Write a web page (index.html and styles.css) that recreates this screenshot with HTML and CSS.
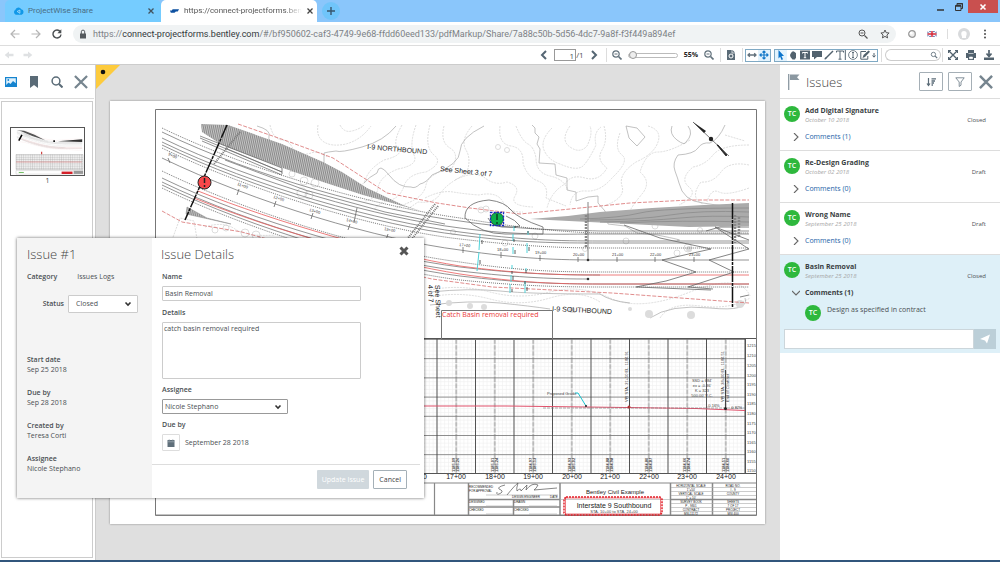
FILE: index.html
```
<!DOCTYPE html>
<html lang="en">

<head>
    <meta charset="UTF-8">
    <meta name="viewport" content="width=device-width, initial-scale=1.0">
    <title>ProjectWise Share - PDF Markup</title>
    <link rel="stylesheet" href="styles.css">
</head>

<body>
    <header class="browser">
        <div class="tab-strip">
            <div class="tab">
                <svg class="favicon" viewBox="0 0 12 10"><path d="M3 9a3 3 0 0 1-.4-5.4A3.4 3.4 0 0 1 9 3.2 3 3 0 0 1 9.500 9z" fill="#1198e8"/><path d="M4.500 5.500l3-1.500v3.500z" fill="none" stroke="#bfe8ff" stroke-width=".8"/></svg>
                <span class="tab-title">ProjectWise Share</span>
                <button class="tab-close" aria-label="Close tab"><svg viewBox="0 0 8 8"><path d="M1.500 1.500l5 5M6.500 1.500l-5 5" stroke="#41535f" stroke-width="1.300"/></svg></button>
            </div>
            <div class="tab active">
                <svg class="favicon" viewBox="0 0 12 10"><path d="M1 4.500l2 0 1-1.500 7 0-1.500 2.500-2 0-1.500 1.500-4 0z" fill="#0d50a0"/></svg>
                <span class="tab-title fade">https://connect-projectforms.ben</span>
                <button class="tab-close" aria-label="Close tab"><svg viewBox="0 0 8 8"><path d="M1.500 1.500l5 5M6.500 1.500l-5 5" stroke="#444" stroke-width="1.300"/></svg></button>
            </div>
            <button class="new-tab" aria-label="New tab"><svg viewBox="0 0 8 8"><path d="M4 0v8M0 4h8" stroke="#38566b" stroke-width="1.400"/></svg></button>
            <div class="window-controls">
                <button aria-label="Minimize"><svg viewBox="0 0 8 8"><path d="M0 7h7" stroke="#333" stroke-width="1.500"/></svg></button>
                <button aria-label="Restore"><svg viewBox="0 0 8 8"><path d="M.5 2.500h5.500v5h-5.500zM2 2.500v-2h5.500v5h-1.500" fill="none" stroke="#333"/><path d="M.5 3h5.500M2 .7h5.500" stroke="#333" stroke-width="1.500"/></svg></button>
                <button class="window-close" aria-label="Close window"><svg viewBox="0 0 8 8"><path d="M1.500 1.500l5 5M6.500 1.500l-5 5" stroke="#fff" stroke-width="1.600"/></svg></button>
            </div>
        </div>
        <div class="address-row">
            <button class="nav-btn" aria-label="Back"><svg viewBox="0 0 10 10"><path d="M9.500 5H1M5 1L1 5l4 4" fill="none" stroke="#b5b5b5" stroke-width="1.200"/></svg></button>
            <button class="nav-btn" aria-label="Forward"><svg viewBox="0 0 10 10"><path d="M.5 5H9M5 1l4 4-4 4" fill="none" stroke="#b5b5b5" stroke-width="1.200"/></svg></button>
            <button class="nav-btn" aria-label="Reload"><svg viewBox="0 0 10 10"><path d="M8.300 2.700A4 4 0 1 0 9 5.500" fill="none" stroke="#4b4f52" stroke-width="1.400"/><path d="M9.300.3v3.900H5.400z" fill="#4b4f52"/></svg></button>
            <div class="omnibox">
                <svg class="lock" viewBox="0 0 8 10"><path d="M1 4.500h6v5H1z" fill="#555a5e"/><path d="M2.300 5V2.800a1.700 1.700 0 0 1 3.400 0V5" fill="none" stroke="#555a5e"/></svg>
                <span class="url">https://<b>connect-projectforms.bentley.com</b>/#/bf950602-caf3-4749-9e68-ffdd60eed133/pdfMarkup/Share/7a88c50b-5d56-4dc7-9a8f-f3f449a894ef</span>
                <button aria-label="Zoom"><svg viewBox="0 0 10 10"><path d="M6.500 6.500L9.500 9.500M2.500 4h3" stroke="#555" stroke-width="1.200"/><circle cx="4" cy="4" r="3" fill="none" stroke="#555"/></svg></button>
                <button aria-label="Bookmark this page"><svg viewBox="0 0 10 10"><path d="M5 1l1.200 2.700 2.900.3-2.200 2 .7 2.900L5 7.400 2.400 8.900 3.100 6 .9 4l2.900-.3z" fill="none" stroke="#555"/></svg></button>
            </div>
            <div class="extensions">
                <button aria-label="Extension"><svg viewBox="0 0 10 10"><circle cx="5" cy="5" r="3.300" fill="#eee" stroke="#9a9a9a" stroke-width="1.300"/><circle cx="4.200" cy="4.200" r="1.400" fill="#fff"/></svg></button>
                <button aria-label="Language"><svg viewBox="0 0 10 10"><path d="M.5 2h9v6h-9z" fill="#334c96"/><path d="M.5 2l9 6M9.500 2l-9 6" stroke="#fff" stroke-width="1.300"/><path d="M5 2v6M.5 5h9" stroke="#fff" stroke-width="2.600"/><path d="M5 2v6M.5 5h9" stroke="#d32838" stroke-width="1.500"/></svg></button>
                <span class="divider"></span>
                <button class="avatar-btn" aria-label="Profile"><svg viewBox="0 0 12 12"><circle cx="6" cy="6" r="6" fill="#d8dadc"/><path d="M4 10V8.500C2.800 6 3 3 6 3s3.200 3 2 5.500V10z" fill="#fff"/></svg></button>
                <button aria-label="Menu"><svg viewBox="0 0 10 10"><g fill="#4d4d4d"><circle cx="5" cy="1.500" r="1"/><circle cx="5" cy="5" r="1"/><circle cx="5" cy="8.500" r="1"/></g></svg></button>
            </div>
        </div>
    </header>

    <nav class="toolbar">
        <div class="history">
            <button aria-label="Previous view"><svg viewBox="0 0 10 10"><path d="M5 1.500v2.300h4.500v2.400H5v2.300L.7 5z" fill="#dfe1e3"/></svg></button>
            <button aria-label="Next view"><svg viewBox="0 0 10 10"><path d="M5 1.500v2.300H.5v2.400H5v2.300L9.300 5z" fill="#dfe1e3"/></svg></button>
        </div>
        <div class="pager">
            <button aria-label="Previous page"><svg viewBox="0 0 10 10"><path d="M7 1L3 5l4 4" fill="none" stroke="#556673" stroke-width="2"/></svg></button>
            <label><input type="text" value="1" aria-label="Page number">/1</label>
            <button aria-label="Next page"><svg viewBox="0 0 10 10"><path d="M3 1l4 4-4 4" fill="none" stroke="#556673" stroke-width="2"/></svg></button>
        </div>
        <div class="zoom">
            <button aria-label="Zoom out"><svg viewBox="0 0 10 10"><circle cx="4" cy="4" r="3.200" fill="none" stroke="#63727d" stroke-width="1.200"/><path d="M6.500 6.500L9.500 9.500" stroke="#63727d" stroke-width="1.700"/><path d="M2.500 4h3" stroke="#63727d"/></svg></button>
            <input type="range" min="5" max="600" value="5" aria-label="Zoom level">
            <output>55%</output>
            <button aria-label="Zoom in"><svg viewBox="0 0 10 10"><circle cx="4" cy="4" r="3.200" fill="none" stroke="#63727d" stroke-width="1.200"/><path d="M6.500 6.500L9.500 9.500" stroke="#63727d" stroke-width="1.700"/><path d="M2.500 4h3" stroke="#63727d"/></svg></button>
        </div>
        <div class="fit">
            <button aria-label="Page layout"><svg viewBox="0 0 10 10"><path d="M1 0h5.500L9 2.500V10H1z" fill="#5a6b77"/><circle cx="5" cy="6" r="2" fill="none" stroke="#fff"/><path d="M6 0v3h3" fill="none" stroke="#fff" stroke-width=".7"/></svg></button>
        </div>
        <div class="tool-box">
            <button aria-label="Fit width"><svg viewBox="0 0 10 10"><path d="M1 5h8M2.800 3.200L1 5l1.800 1.800M7.200 3.200L9 5 7.200 6.800" fill="none" stroke="#63727d" stroke-width="1.300"/></svg></button>
            <button class="on" aria-label="Fit page"><svg viewBox="0 0 10 10"><path d="M1 5h8M5 1v8M2.500 3.500L1 5l1.500 1.500M7.500 3.500L9 5 7.500 6.500M3.500 2.500L5 1l1.500 1.500M3.500 7.500L5 9l1.500-1.500" fill="none" stroke="#1479c9" stroke-width="1.200"/></svg></button>
        </div>
        <div class="tool-box markup">
            <button class="on" aria-label="Select"><svg viewBox="0 0 10 10"><path d="M2.500 0l5.500 6H5.500L7 9.300 5.500 10 4.200 6.700 2.500 8.500z" fill="#0b74cc"/></svg></button>
            <button aria-label="Pan"><svg viewBox="0 0 10 10"><path d="M2 5l1-2 1-1.200 1.200-.5 1.500.6 1.300 1.300v4L7 9.500H4.500L2.500 7z" fill="#52626e"/></svg></button>
            <button aria-label="Select text"><svg viewBox="0 0 10 10"><path d="M0 .5h10v9H0z" fill="#52626e"/><path d="M2.500 3.500v-1h5v1M5 2.500v5M3.800 7.700h2.400" fill="none" stroke="#fff"/></svg></button>
            <button aria-label="Note"><svg viewBox="0 0 10 10"><path d="M0 1h10v6H5L2 9.500V7H0z" fill="#52626e"/></svg></button>
            <button aria-label="Line"><svg viewBox="0 0 10 10"><path d="M1 9l8-8" stroke="#52626e" stroke-width="1.500"/><path d="M.5 9.500l.7-2.200 1.500 1.500z" fill="#52626e"/></svg></button>
            <button aria-label="Text"><svg viewBox="0 0 10 10"><path d="M.5 2.500V1h7v1.500M4 1v8M2.500 9.200h3M9.300 0v10" fill="none" stroke="#52626e"/></svg></button>
            <button aria-label="Stamp"><svg viewBox="0 0 10 10"><circle cx="5" cy="5" r="4.400" fill="none" stroke="#52626e" stroke-width=".8"/><path d="M5 2.500v5M4 2.500h2M4 7.500h2" stroke="#52626e" stroke-width=".9"/></svg></button>
            <button aria-label="Edit"><svg viewBox="0 0 10 10"><path d="M6 1.500H.8v7.700h7V6" fill="none" stroke="#52626e"/><path d="M2.500 8l1-3L8.500.5l1.500 1.200L5 7z" fill="#52626e"/></svg></button>
            <button class="more" aria-label="More tools"><svg viewBox="0 0 6 10"><path d="M3 3v4M1.500 5.500L3 7.200l1.500-1.700" fill="none" stroke="#52626e"/></svg></button>
        </div>
        <form class="find">
            <input type="search" aria-label="Find in document">
            <button type="button" aria-label="Find"><svg viewBox="0 0 10 10"><circle cx="4.300" cy="4.300" r="2.700" fill="none" stroke="#63727d" stroke-width="1.100"/><path d="M6.500 6.500L9 9" stroke="#63727d" stroke-width="1.500"/></svg></button>
        </form>
        <div class="output-tools">
            <button aria-label="Full screen"><svg viewBox="0 0 10 10"><path d="M1 1l8 8M9 1L1 9" stroke="#52626e" stroke-width="1.300"/><path d="M.5 3V.5H3M7 .5h2.500V3M9.500 7v2.500H7M3 9.500H.5V7" fill="none" stroke="#52626e" stroke-width="1.200"/></svg></button>
            <button aria-label="Print"><svg viewBox="0 0 10 10"><path d="M2 0h6v3h2v5H8v2H2V8H0V3h2z" fill="#52626e"/><path d="M2.500 3.500h5M3.500 7h3v1.700h-3z" fill="#fff" stroke="#fff" stroke-width=".6"/></svg></button>
            <button aria-label="Download"><svg viewBox="0 0 10 10"><path d="M5 0v6M2.500 3.500L5 6.500l2.500-3" fill="none" stroke="#52626e" stroke-width="1.700"/><path d="M0 7.500h10V10H0z" fill="#52626e"/></svg></button>
        </div>
    </nav>

    <main class="workspace">
        <aside class="pages">
            <div class="pages-tools">
                <button aria-label="Thumbnails"><svg viewBox="0 0 12 12"><path d="M0 1h12v10H0z" fill="#1684cf"/><path d="M1.200 2.200h9.600v5L8 5 5.500 8 3.500 6.500 1.200 9z" fill="#dff1fc"/><circle cx="3.300" cy="4" r=".9" fill="#1684cf"/></svg></button>
                <button aria-label="Bookmarks"><svg viewBox="0 0 12 12"><path d="M2 0h8v12L6 9l-4 3z" fill="#5a6b77"/></svg></button>
                <button aria-label="Search"><svg viewBox="0 0 12 12"><circle cx="5" cy="5" r="3.900" fill="none" stroke="#5a6b77" stroke-width="1.500"/><path d="M8 8l3.500 3.500" stroke="#5a6b77" stroke-width="2"/></svg></button>
                <button class="big" aria-label="Close panel"><svg viewBox="0 0 12 12"><path d="M.8.8l10.400 10.400M11.200.8L.8 11.200" stroke="#76858f" stroke-width="1.900"/></svg></button>
            </div>
            <div class="pages-list">
                <a class="thumb" href="#sheet">
                    <svg viewBox="110 101 655 423">
                        <use href="#plan-lines"/>
                        <path d="M162 125L201 124L229 125L321 162L417 210L300 173L202 131z" fill="#555"/>
                        <path d="M530 219l219-17v24z" fill="#333"/>
                        <path d="M180 215l28-52M490 219h14" stroke="#000" stroke-width="14"/>
                        <path d="M155 339h601v134H155z" fill="url(#thumb-grid)" stroke="#666" stroke-width="2"/>
                        <path d="M155 406h590" stroke="#d55" stroke-width="4"/>
                        <path d="M155 483h601v32H155z" fill="#fff" stroke="#aaa" stroke-width="3"/>
                        <path d="M180 500h45" stroke="#5fb54f" stroke-width="8"/>
                        <path d="M564 503h98" stroke="#d3202a" stroke-width="22"/>
                        <path d="M672 499h84" stroke="#999" stroke-width="28"/>
                        <path d="M385 315v22" stroke="#c33" stroke-width="10"/>
                    </svg>
                    <span>1</span>
                </a>
            </div>
        </aside>

        <section class="viewer" id="sheet">
            <svg class="flag" viewBox="0 0 24 24"><path d="M0 0h24L0 24z" fill="#fdcb3d"/><circle cx="7" cy="7" r="2.300" fill="#111"/></svg>
            <svg class="sheet" viewBox="110 101 655 423" role="img" aria-label="Interstate 9 Southbound plan and profile">
                <defs>
                    <pattern id="hatch" width="2" height="8" patternUnits="userSpaceOnUse" patternTransform="rotate(-12)"><path d="M0 0h2v8h-2z" fill="#c4c4c4"/><path d="M.5 0v8" stroke="#8a8a8a" stroke-width="1"/></pattern>
                    <pattern id="minor" x="436.500" y="339" width="3.850" height="3.840" patternUnits="userSpaceOnUse"><path d="M0 .5h4M.5 0v4" stroke="#ededed" stroke-width=".6"/></pattern>
                    <pattern id="major" x="436.500" y="339" width="38.500" height="19.200" patternUnits="userSpaceOnUse"><path d="M0 .4h39" stroke="#666" stroke-width=".8"/><path d="M.5 0v20" stroke="#444" stroke-width=".9"/><path d="M19.750 0v20" stroke="#777" stroke-width=".9" stroke-dasharray="5 1"/></pattern>
                    <pattern id="thumb-grid" width="20" height="20" patternUnits="userSpaceOnUse"><path d="M0 0h20v20H0z" fill="#eee"/><path d="M0 1h20M1 0v20" stroke="#999" stroke-width="3"/></pattern>
                </defs>

                <!-- sheet border -->
                <path d="M155.500 109.500h601v406h-601z" fill="#fff" stroke="#777"/>

                <!-- terrain contours -->
                <g fill="none" stroke="#cfcfcf" stroke-width=".7" stroke-dasharray="2 1">
                    <path d="M270 125q3 14 12 15t12 12q9 4 17 1t16 4"/>
                    <path d="M318 125q-2 12 6 17t22 2q15-4 25-18"/>
                    <path d="M340 125q4 8 12 6t12-6"/>
                    <path d="M402 125q-10 18-4 24t-14 11q-14 8-18 18t-8 7"/>
                    <path d="M416 125q-7 20-2 30t-16 14q-18 7-20 19t-14 13"/>
                    <path d="M430 125q-6 22 4 30t-8 17q-18 2-22 14t-14 14q-12 3-16 10"/>
                    <path d="M444 126q-4 16 6 22t2 20q-24 6-26 17t-16 17l-18 8"/>
                    <path d="M472 126q-12 14-6 24t0 24q-20 10-26 20t-22 8l-10 7"/>
                    <path d="M500 126q-2 18 11 20t12 17q4 14 15 18t8 17l20 8"/>
                    <path d="M516 126q6 15 12 18t8 14q0 15 14 18t18 14"/>
                    <path d="M552 128q-12 12-8 22t16 14q18 8 24 1t12-20q-3-12 5-18"/>
                    <path d="M570 126q-10 14 0 21t17-1q6-12 3-20"/>
                    <path d="M604 126q4 14-2 24t5 18q-8 14-22 10t-20 6q-14 8-18 24"/>
                    <path d="M620 133q-6 16 2 22t-10 23q-12 14-26 13t-16 14"/>
                    <path d="M648 126q14 4 10 16t-22 20q-18 12-14 24t-18 20"/>
                    <path d="M690 140q-20 12-32 12t-18 20q12 10 2 22t-12 17"/>
                    <path d="M749 145q-28 0-36 10t-20 12q-14 12-4 20t-10 18"/>
                    <path d="M749 165q-20-4-28 7t-20 10q-12 16 2 22"/>
                    <path d="M749 188q-22 8-30 4t-12 10"/>
                    <path d="M725 135l20 6M455 180q20-10 30-2t22 4q14 4 8 14t18 11"/>
                    <path d="M425 198q16-8 28-6t26 3q18-4 24 7t20 10"/>
                    <path d="M172 240l8-22 14 3 3 18M205 227q18-6 30 2t40 6M430 290q30-6 60 2t60 0 60 6 80-6 60 4"/>
                    <path d="M430 297q30-6 60 2t60-1 50 4M660 318q10-16 40-12t50-8"/>
                </g>
                <g fill="none" stroke="#a8a8a8" stroke-width=".7">
                    <path d="M396 126q-12 15-34 21t-26 4q-9 1-12 2v16l-6-3M257 126q14 4 12 10t10 8"/>
                    <path d="M484 126q-24 12-24 25t-28 24q-6 8-12 9-5 5-9 3-12 1-22-12t-12-2q-8 4-13 10"/>
                    <path d="M532 125l3 3 0 5 4 4-2 7 3 5-1 14 16 1 1 11 11 3 0 12 9 2v9l12-4 10-1v7l7 8 3 13 17 2 12 7 20 2q30 6 20 5"/>
                    <path d="M626 126l3 12 8 8 8-9-8-9zM672 126q-3 8 5 14t9 2q8-8 2-16M725 125q-6 14-15 18-8-1-12 5t-20 7q-6 8-3 16t4 12q4 18 24 20l20 3"/>
                    <path d="M430 292q40-4 70-1t100 3q10 7 30 9M430 305q40-5 70-2t50 6M650 318q20-14 60-10t35-10"/>
                </g>
                <g fill="none" stroke="#d4d4d4" stroke-width=".8">
                    <circle cx="498" cy="147" r="2.500"/><circle cx="507" cy="150" r="2.500"/><circle cx="481" cy="210" r="3"/><circle cx="486" cy="209" r="3"/>
                    <circle cx="292" cy="174" r="3"/><circle cx="304" cy="181" r="4"/><circle cx="315" cy="183" r="4"/><circle cx="302" cy="193" r="5"/><circle cx="309" cy="195" r="4"/>
                    <circle cx="215" cy="230" r="3"/><circle cx="226" cy="228" r="3"/><circle cx="245" cy="233" r="4"/><circle cx="256" cy="235" r="4"/><circle cx="453" cy="232" r="2.500"/>
                    <circle cx="505" cy="243" r="3"/><circle cx="535" cy="236" r="3"/><circle cx="585" cy="249" r="2.500"/><circle cx="626" cy="241" r="3"/><circle cx="655" cy="226" r="3"/><circle cx="670" cy="223" r="2.500"/><circle cx="688" cy="248" r="4"/><circle cx="700" cy="230" r="2.500"/><circle cx="677" cy="253" r="3"/>
                </g>
                <g fill="#dcdcdc">
                    <circle cx="470" cy="306" r="3"/><circle cx="484" cy="307" r="3"/><circle cx="572" cy="310" r="3"/><circle cx="649" cy="314" r="4"/><circle cx="691" cy="315" r="4"/><circle cx="630" cy="309" r="2"/><circle cx="740" cy="304" r="4"/><circle cx="449" cy="303" r="3"/><circle cx="689" cy="249" r="3"/>
                </g>

                <!-- shoulder hatching -->
                <path d="M201 124L228 125L282 144L323 162L342 172L367 188L403 205L421 211L363 195L323 182L280 167L222 145L202 132z" fill="url(#hatch)"/>
                <path d="M187 207l20 11 24 6-45-10z" fill="url(#hatch)" stroke="#888" stroke-width=".5"/>
                <path d="M530 219l38-3 32-4 52-4 52-3 45-2v23l-60 1-60-3-60-3z" fill="#ababab"/>
                <path d="M580 219q40-1 60-6t109-5M590 220q50 0 80-5t79-3M600 222q50-1 80-4t69-1M620 223q60-3 129-1" fill="none" stroke="#8c8c8c" stroke-width=".8"/>

                <!-- travel lanes -->
                <g id="plan-lines" fill="none">
                    <g stroke="#666" stroke-width=".7">
                        <path d="M162 132C255 177 380 211 460 221 520 230 560 230 600 231H749"/>
                        <path d="M162 138C255 183 380 218 460 228 520 236 560 234 600 234H749"/>
                        <path d="M162 142C255 187 380 222 460 232 520 240 560 241 600 241H749"/>
                        <path d="M162 145C255 190 380 226 460 235 520 243 560 243 600 243H749"/>
                        <path d="M162 158C255 203 380 240 460 250 520 259 560 260 600 260H749"/>
                        <path d="M162 178C255 223 380 257 460 267 520 274 560 275 600 275"/>
                        <path d="M162 182C255 227 380 261 460 271 520 278 560 279 588 279"/>
                        <path d="M162 185C255 230 380 266 460 276 520 283 560 284 600 284H749"/>
                        <path d="M200 136l82 32M200 138l82 34M202 141l80 34M225 148l57 24M225 160l80 30 80 22 60 12"/>
                    </g>
                    <g stroke="#555" stroke-width=".8" stroke-dasharray="1 1">
                        <path d="M162 128C255 173 380 207 460 218 520 228 560 232 600 233H749"/>
                        <path d="M162 148C255 193 380 230 460 239 520 246 560 248 600 248H749"/>
                        <path d="M162 171C255 216 380 252 460 262 520 271 560 272 600 272H749"/>
                        <path d="M162 188C255 233 380 270 460 280 520 286 560 287 600 287H749"/>
                    </g>
                    <g stroke="#ea5a5a" stroke-width=".8">
                        <path d="M198 191C275 222 390 255 460 266 520 274 560 275 600 275H749"/>
                        <path d="M194 198C275 231 390 263 460 274 520 283 560 284 600 284H749"/>
                    </g>
                    <g stroke="#dc8080" stroke-width=".9" stroke-dasharray="4 1.500">
                        <path d="M238 124l49 17 46 17 54 35 50 10 33 5 50 6 50-5 60-6 60-3h59"/>
                        <path d="M162 211l20 11 60 10 90 25 100 22 60 8 120 6 137 10"/>
                    </g>
                </g>
                <g fill="none" stroke="#666" stroke-width=".8">
                    <path d="M168 158l2 5M239 189l-2 6M276 201l-2 6M313 213l-2 6M350 224l-2 6M388 234l-2 6M463 247v6M501 252v6M540 255v6M578 257v5M617 257v5M655 257v5M694 257v5"/>
                    <path d="M588 202v58M357 208l-3 14M282 168v6"/>
                    <path d="M465 218q-1-16 24-18 16 2 22 10t32 17v7l-38 0q-24 0-40-16M488 218q4 8 14 9t18-1q-4-6-14-10"/>
                    <path d="M624 225l36 13 51 11-49 11 34 12-30 9-30 6 75 3M749 240l-34-13 34 22-40 11 25 12-46 15 25 2M706 231l14-4 29 0M740 297l9-2"/>
                </g>
                <!-- match lines -->
                <path d="M227 125L185 220" stroke="#111" stroke-width="1.500" stroke-dasharray="14 1 3 1"/>
                <path d="M732.500 203v105" stroke="#111" stroke-width="1.500" stroke-dasharray="16 1 3 1"/>
                <path d="M435 204l-27 34M438 206l-27 34M240 132l-26 32" stroke="#777" stroke-width="2" stroke-dasharray="1 1"/>
                <path d="M586 215v32M735 215v28M739 217v20" stroke="#888" stroke-width="2.500" stroke-dasharray="2 1"/>
                <circle cx="588" cy="260" r="1.300" fill="#333"/><circle cx="588" cy="279" r="1.300" fill="#333"/>

                <!-- drainage -->
                <g stroke="#4fd3da" stroke-width="1">
                    <path d="M480 234l-1 16M479 252l-2 19M514 226v5M513 234v7M513 247v7M528 231v4M527 243v10M512 265v4M511 275v7M510 284v9M526 268v3M525 281v12"/>
                </g>
                <g stroke="#333" stroke-width=".8">
                    <path d="M482 240v4M480 260v4M515 226v2M514 239v3M528 231v2M515 250v4M529 247v4M512 271v3M513 276v4M512 289v3M526 270v3M525 281v3M527 287v4"/>
                </g>

                <!-- north arrow -->
                <path d="M693 122l36 34" stroke="#444" stroke-width=".7"/>
                <path d="M693 122l13 9-2 2z" fill="#222"/>
                <path d="M717 145l9 11 1-1-9-10z" fill="#222" stroke="#222" stroke-width=".8"/>
                <circle cx="711" cy="139" r="2.200" fill="#222"/>

                <!-- plan labels -->
                <g class="label">
                    <text x="367" y="149" transform="rotate(5 367 149)">I-9 NORTHBOUND</text>
                    <text x="440" y="171" transform="rotate(6 440 171)">See Sheet 3 of 7</text>
                    <text x="552" y="311" transform="rotate(3 552 311)">I-9 SOUTHBOUND</text>
                    <text x="435" y="285" transform="rotate(88 435 285)">See Sheet</text>
                    <text x="428" y="285" transform="rotate(88 428 285)">4 of 7</text>
                </g>
                <g class="station">
                    <text x="168" y="155" transform="rotate(25 168 155)">9+00</text>
                    <text x="237" y="185" transform="rotate(20 237 185)">11+00</text>
                    <text x="273" y="198" transform="rotate(18 273 198)">12+00</text>
                    <text x="309" y="211" transform="rotate(16 309 211)">13+00</text>
                    <text x="346" y="221" transform="rotate(14 346 221)">14+00</text>
                    <text x="384" y="230" transform="rotate(12 384 230)">15+00</text>
                    <text x="459" y="246" transform="rotate(6 459 246)">17+00</text>
                    <text x="497" y="251">18+00</text>
                    <text x="535" y="254">19+00</text>
                    <text x="573" y="256">20+00</text>
                    <text x="612" y="256">21+00</text>
                    <text x="650" y="256">22+00</text>
                    <text x="689" y="256">23+00</text>
                </g>

                <!-- profile grid -->
                <path d="M156 339h589v134H156z" fill="url(#minor)"/>
                <path d="M156 339h589v134H156z" fill="url(#major)"/>
                <path d="M156 338.500h600M156 473.500h600M745.500 339v134" stroke="#555" stroke-width="1"/>
                <path d="M156 406h350l120 1.500 70 1 49 2" fill="none" stroke="#e0506a" stroke-width="1"/>
                <path d="M543 408h202" stroke="#777" stroke-width=".6" stroke-dasharray="3 1"/>
                <path d="M629.500 357v50M725.500 370v39" stroke="#444"/>
                <path d="M575 393l3 0 8 13" fill="none" stroke="#18c4cf"/>
                <circle cx="586" cy="406" r="1" fill="#222"/><circle cx="629" cy="407" r="1.500" fill="#a33"/><circle cx="725.500" cy="408.500" r="1.500" fill="#222"/>
                <g class="note">
                    <text x="547" y="395">Proposed Grade</text>
                    <text x="702" y="382" text-anchor="middle">SSD = 684'</text>
                    <text x="702" y="387" text-anchor="middle">ex = -0.36'</text>
                    <text x="702" y="392" text-anchor="middle">K = 323</text>
                    <text x="702" y="397" text-anchor="middle">500.00' V.C.</text>
                    <text x="707" y="407">-0.16%</text>
                    <text x="730" y="409">-0.82%</text>
                    <text x="628" y="402" transform="rotate(-90 628 402)">VPI STA. 21+50 EL. 1184.91</text>
                    <text x="724" y="402" transform="rotate(-90 724 402)">VPI STA. 24+00 EL. 1184.51</text>
                    <text x="729" y="402" transform="rotate(-90 729 402)">End of Contract</text>
                </g>
                <g class="note dark">
                    <text x="455" y="472" transform="rotate(-90 455 472)">1185.09</text><text x="459" y="472" transform="rotate(-90 459 472)">1185.26</text>
                    <text x="494" y="472" transform="rotate(-90 494 472)">1185.01</text><text x="498" y="472" transform="rotate(-90 498 472)">1185.24</text>
                    <text x="532" y="472" transform="rotate(-90 532 472)">1184.97</text><text x="536" y="472" transform="rotate(-90 536 472)">1185.13</text>
                    <text x="571" y="472" transform="rotate(-90 571 472)">1184.93</text><text x="575" y="472" transform="rotate(-90 575 472)">1185.02</text>
                    <text x="609" y="472" transform="rotate(-90 609 472)">1184.88</text><text x="613" y="472" transform="rotate(-90 613 472)">1184.98</text>
                    <text x="648" y="472" transform="rotate(-90 648 472)">1184.80</text><text x="652" y="472" transform="rotate(-90 652 472)">1184.87</text>
                    <text x="686" y="472" transform="rotate(-90 686 472)">1184.66</text><text x="690" y="472" transform="rotate(-90 690 472)">1184.74</text>
                    <text x="725" y="472" transform="rotate(-90 725 472)">1184.51</text><text x="729" y="472" transform="rotate(-90 729 472)">1184.60</text>
                </g>
                <g class="note">
                    <text x="747" y="347">1215</text><text x="747" y="357">1210</text><text x="747" y="367">1205</text><text x="747" y="377">1200</text><text x="747" y="386">1195</text><text x="747" y="396">1190</text><text x="747" y="405">1185</text><text x="747" y="415">1180</text><text x="747" y="425">1175</text><text x="747" y="434">1170</text><text x="747" y="444">1165</text><text x="747" y="453">1160</text><text x="747" y="463">1155</text><text x="747" y="472">1150</text>
                </g>
                <g class="axis">
                    <text x="417" y="479">16+00</text><text x="456" y="479">17+00</text><text x="495" y="479">18+00</text><text x="533" y="479">19+00</text><text x="572" y="479">20+00</text><text x="610" y="479">21+00</text><text x="649" y="479">22+00</text><text x="687" y="479">23+00</text><text x="726" y="479">24+00</text>
                </g>

                <!-- title block -->
                <path d="M156 483h600M434.500 483v32M156 515h600" stroke="#888" stroke-width="1.200"/>
                <path d="M468.500 483v32M560 483v32M670.500 483v32M712.500 483v32M468 499.500h92M513.500 499v16M468 507h92M670 499.500h86" stroke="#888" stroke-width="1.500" fill="none"/>
                <path d="M671 487.500h85M671 491.500h85M671 495.500h85M671 503.500h85M671 507.500h85M671 511.500h85M560 499.500h110M486 495h72M486 506h27M486 514h27M529 506h28M529 514h28" stroke="#aaa" stroke-width=".6"/>
                <path d="M505 485q-8 2-6 4 5 2 2 4-5 3-4-1M507 495q8-10 11-12-2 6-1 8 4-4 4 0l6-6-1 5q6-8 12-5-2 4-4 5l23-2" fill="none" stroke="#555" stroke-width=".7"/>
                <path d="M566 497h94l2 2v14l-2 2h-94l-2-2v-14z" fill="none" stroke="#e2202a" stroke-width="1.500" stroke-dasharray="2 1"/>
                <path d="M565.500 498h95v16h-95z" fill="none" stroke="#e2202a" stroke-width=".6"/>
                <text class="project" x="615" y="494">Bentley Civil Example</text>
                <text class="label" x="614" y="508" text-anchor="middle">Interstate 9 Southbound</text>
                <text class="note" x="614" y="513" text-anchor="middle">STA. 10+00 to STA. 24+00</text>
                <g class="tiny">
                    <text x="469" y="488">RECOMMENDED</text><text x="469" y="492">FOR APPROVAL</text><text x="512" y="498">DESIGN ENGINEER</text><text x="550" y="498">DATE</text>
                    <text x="469" y="503">DESIGNED</text><text x="514" y="503">DRAWN</text><text x="469" y="511">CHECKED</text><text x="514" y="511">CHECKED</text>
                </g>
                <g class="tiny center">
                    <text x="691" y="487">HORIZONTAL SCALE</text><text x="691" y="491">1"=50'</text><text x="691" y="495">VERTICAL SCALE</text><text x="691" y="499">1" = 10'</text><text x="691" y="503">SURVEY BOOK</text><text x="691" y="507">P - 9801</text><text x="691" y="511">CONTRACT</text><text x="691" y="515">MSL11172</text>
                    <text x="733" y="487">ROAD NO.</text><text x="733" y="491">I - 9</text><text x="733" y="495">COUNTY</text><text x="733" y="503">SHEETS</text><text x="733" y="507">7 OF 17</text><text x="733" y="511">PROJECT</text><text x="733" y="515">MSI 400</text>
                </g>

                <!-- markups -->
                <path d="M441.500 310.500h111v29h-111z" fill="none" stroke="#777"/>
                <text class="markup-text" x="442" y="317">Catch Basin removal required</text>
                <circle cx="204.500" cy="182.500" r="6.500" fill="#f8474b" stroke="#222"/><path d="M204.500 178v5M204.500 185v2" stroke="#222" stroke-width="1.500"/>
                <circle cx="497" cy="219" r="6.500" fill="#0cb04b" stroke="#222" stroke-width=".7"/><path d="M497 214v6M497 222v2" stroke="#0a5327" stroke-width="1.800"/>
                <path d="M490.500 212.500h13v13h-13z" fill="none" stroke="#1528c8" stroke-width="1.300" stroke-dasharray="2 1.200"/>
            </svg>
        </section>

        <aside class="issues">
            <div class="issues-head">
                <svg class="issues-flag" viewBox="0 0 12 16"><path d="M.7 0v16" stroke="#8b98a1" stroke-width="1.300"/><path d="M2 .5h9.500L9 3.200l2.500 2.800H2z" fill="#8b98a1"/></svg>
                <h2>Issues</h2>
                <button class="boxed" aria-label="Sort"><svg viewBox="0 0 10 10"><path d="M2.500 1v7.500M1 6.500l1.500 2L4 6.500" fill="none" stroke="#5a6b77" stroke-width="1.200"/><path d="M5.500 1.800H10M5.500 4h3.500M5.500 6H8M5.500 8h1.500" stroke="#5a6b77" stroke-width="1.300"/></svg></button>
                <button class="boxed" aria-label="Filter"><svg viewBox="0 0 10 10"><path d="M.8.8h8.400L6 5v3.200L4.200 9.500V5z" fill="none" stroke="#76858f" stroke-width=".9"/></svg></button>
                <button class="big" aria-label="Close issues"><svg viewBox="0 0 12 12"><path d="M.8.8l10.400 10.400M11.200.8L.8 11.200" stroke="#76858f" stroke-width="2.100"/></svg></button>
            </div>
            <ul class="issue-list">
                <li class="issue">
                    <span class="avatar">TC</span>
                    <div class="issue-text"><h3>Add Digital Signature</h3><time>October 10 2018</time></div>
                    <span class="state">Closed</span>
                    <a class="comments" href="#"><svg viewBox="0 0 8 8"><path d="M2 0l4 4-4 4" fill="none" stroke="#666" stroke-width="1.100"/></svg>Comments (1)</a>
                </li>
                <li class="issue">
                    <span class="avatar">TC</span>
                    <div class="issue-text"><h3>Re-Design Grading</h3><time>October 02 2018</time></div>
                    <span class="state">Draft</span>
                    <a class="comments" href="#"><svg viewBox="0 0 8 8"><path d="M2 0l4 4-4 4" fill="none" stroke="#666" stroke-width="1.100"/></svg>Comments (0)</a>
                </li>
                <li class="issue">
                    <span class="avatar">TC</span>
                    <div class="issue-text"><h3>Wrong Name</h3><time>September 25 2018</time></div>
                    <span class="state">Draft</span>
                    <a class="comments" href="#"><svg viewBox="0 0 8 8"><path d="M2 0l4 4-4 4" fill="none" stroke="#666" stroke-width="1.100"/></svg>Comments (0)</a>
                </li>
                <li class="issue selected">
                    <span class="avatar">TC</span>
                    <div class="issue-text"><h3>Basin Removal</h3><time>September 25 2018</time></div>
                    <span class="state">Closed</span>
                    <a class="comments open" href="#"><svg viewBox="0 0 8 8"><path d="M0 2l4 4 4-4" fill="none" stroke="#666" stroke-width="1.100"/></svg>Comments (1)</a>
                    <div class="comment"><span class="avatar">TC</span><p>Design as specified in contract</p></div>
                    <form class="reply">
                        <input type="text" aria-label="Add a comment">
                        <button type="button" aria-label="Send"><svg viewBox="0 0 10 10"><path d="M0 5L10 .5 7 9.500 5 6.500z" fill="#fff"/></svg></button>
                    </form>
                </li>
            </ul>
        </aside>
    </main>
    <footer class="taskbar"></footer>

    <div class="dialog" role="dialog" aria-labelledby="issueTitle">
        <section class="summary">
            <h2 id="issueTitle">Issue #1</h2>
            <div class="category"><b>Category</b><span>Issues Logs</span></div>
            <div class="status">
                <label for="status">Status</label>
                <span class="select">
                    <select id="status"><option>Closed</option><option>Draft</option></select>
                    <svg viewBox="0 0 8 8"><path d="M1.500 2.500L4 5l2.500-2.500" fill="none" stroke="#333" stroke-width="1.600"/></svg>
                </span>
            </div>
            <dl>
                <dt>Start date</dt><dd>Sep 25 2018</dd>
                <dt>Due by</dt><dd>Sep 28 2018</dd>
                <dt>Created by</dt><dd>Teresa Corti</dd>
                <dt>Assignee</dt><dd>Nicole Stephano</dd>
            </dl>
        </section>
        <form class="details">
            <div class="details-head">
                <h2>Issue Details</h2>
                <button type="button" aria-label="Close dialog"><svg viewBox="0 0 10 10"><path d="M1.500 1.500l7 7M8.500 1.500l-7 7" stroke="#555" stroke-width="3"/></svg></button>
            </div>
            <div class="fields">
                <label for="name">Name</label>
                <input type="text" id="name" value="Basin Removal">
                <label for="details">Details</label>
                <textarea id="details">catch basin removal required</textarea>
                <label for="assignee">Assignee</label>
                <span class="select">
                    <select id="assignee"><option>Nicole Stephano</option></select>
                    <svg viewBox="0 0 8 8"><path d="M1.500 2.500L4 5l2.500-2.500" fill="none" stroke="#333" stroke-width="1.600"/></svg>
                </span>
                <label for="dueBy">Due by</label>
                <div class="due">
                    <button type="button" id="dueBy"><svg viewBox="0 0 8 8"><path d="M.5 1h7v7h-7z" fill="#5f6f7a"/><path d="M.5 2.800h7M2.200 0v1.500M5.800 0v1.500" stroke="#aab4bb" stroke-width=".7"/></svg></button>
                    <span>September 28 2018</span>
                </div>
            </div>
            <div class="actions">
                <button type="submit" disabled>Update Issue</button>
                <button type="button" class="cancel">Cancel</button>
            </div>
        </form>
    </div>
</body>

</html>
```
FILE: styles.css
```
* {
    box-sizing: border-box;
}

body {
    display: flex;
    flex-direction: column;
    height: 100vh;
    margin: 0;
    overflow: hidden;
    font-family: "Open Sans", sans-serif;
    font-size: 7px;
    line-height: 10px;
    color: #4a4f53;
    background-color: #fff;
}

h2,
h3,
p,
ul,
dl,
dd {
    margin: 0;
    padding: 0;
}

button,
input,
select,
textarea {
    font: inherit;
    color: inherit;
}

button {
    display: flex;
    align-items: center;
    justify-content: center;
    flex-shrink: 0;
    padding: 0;
    border: none;
    background: none;
    cursor: pointer;
}

svg {
    display: block;
    flex-shrink: 0;
}

button svg {
    width: 10px;
    height: 10px;
}

/* browser chrome */
.browser {
    font-family: Roboto, sans-serif;
}

.tab-strip {
    display: flex;
    height: 22px;
    padding-left: 5px;
    background-color: #8ac6fb;
}

.tab {
    display: flex;
    align-items: center;
    width: 156px;
    padding: 0 6px 0 8px;
    border-radius: 5px 5px 0 0;
    background-color: #75ccff;
    color: #4a6c84;
    font-size: 8px;
    line-height: 14px;
}

.tab.active {
    background-color: #fff;
    color: #555;
}

.favicon {
    width: 11px;
    height: 10px;
    margin-right: 4px;
}

.tab-title {
    flex: 1;
    white-space: nowrap;
}

.tab-title.fade {
    mask-image: linear-gradient(to right, #000 85%, transparent);
}

.tab-close {
    margin-left: 4px;
}

.tab-close svg,
.new-tab svg,
.window-controls svg {
    width: 8px;
    height: 8px;
}

.new-tab {
    width: 18px;
    height: 18px;
    margin: 2px 5px;
    border-radius: 50%;
    background-color: #70c5fa;
}

.window-controls {
    display: flex;
    height: 13px;
    margin-left: auto;
    padding-right: 2px;
}

.window-controls button {
    width: 18px;
}

.window-controls .window-close {
    width: 30px;
    background-color: #c9504f;
}

.address-row {
    display: flex;
    align-items: center;
    gap: 11px;
    height: 24px;
    padding: 0 10px;
    border-bottom: 1px solid #ddd;
}

.omnibox {
    display: flex;
    flex: 1;
    align-items: center;
    gap: 12px;
    min-width: 0;
    height: 18px;
    padding: 0 6px 0 6px;
    border-radius: 9px;
    background-color: #f0f3f4;
}

.lock {
    width: 8px;
    height: 10px;
    margin-right: -6px;
}

.url {
    flex: 1;
    white-space: nowrap;
    font-size: 9px;
    line-height: 14px;
    color: #7c8185;
}

.url b {
    font-weight: normal;
    color: #33383b;
}

.extensions {
    display: flex;
    align-items: center;
    gap: 10px;
}

.divider {
    width: 1px;
    height: 10px;
    background-color: #ddd;
}

.avatar-btn svg {
    width: 12px;
    height: 12px;
}

/* pdf toolbar */
.toolbar {
    display: flex;
    align-items: center;
    height: 19px;
    padding: 0 6px 0 4px;
    border-bottom: 1px solid #ccc;
}

.history {
    display: flex;
    gap: 9px;
    margin-right: auto;
}

.pager,
.zoom,
.fit,
.find {
    display: flex;
    align-items: center;
    height: 14px;
    border-right: 1px solid #ddd;
}

.pager {
    gap: 5px;
    padding-right: 7px;
    font-size: 8px;
}

.pager label {
    display: flex;
    align-items: center;
}

.pager input {
    width: 22px;
    height: 12px;
    padding: 0 1px;
    border: 1px solid #999;
    text-align: right;
}

.zoom {
    gap: 6px;
    padding: 0 6px 0 5px;
}

.zoom output {
    font-weight: bold;
    color: #222;
}

.zoom input {
    appearance: none;
    width: 50px;
    height: 5px;
    margin: 0;
    border: 1px solid #bbb;
    border-radius: 3px;
    background-color: #fff;
}

.zoom input::-webkit-slider-thumb {
    appearance: none;
    width: 8px;
    height: 8px;
    border: 1px solid #999;
    border-radius: 50%;
    background-color: #eee;
}

.fit {
    padding: 0 6px 0 5px;
}

.tool-box {
    display: flex;
    align-items: center;
    height: 13px;
    margin-left: 2px;
    border: 1px solid #7fa9c4;
}

.tool-box button {
    width: 12px;
    height: 11px;
}

.tool-box .on {
    background-color: #e3f3fd;
}

.tool-box.markup {
    margin-left: 3px;
}

.markup .more,
.markup .more svg {
    width: 6px;
}

.find {
    margin-left: 3px;
    padding: 0 1px 0 3px;
    border-left: 1px solid #ddd;
}

.find input {
    width: 42px;
    height: 12px;
    padding: 0 5px;
    border: 1px solid #ccc;
    border-right: none;
    border-radius: 6px 0 0 6px;
    outline: none;
    appearance: none;
}

.find button {
    width: 14px;
    height: 12px;
    border: 1px solid #ccc;
    border-left: none;
    border-radius: 0 6px 6px 0;
}

.find button svg {
    width: 8px;
    height: 8px;
}

.output-tools {
    display: flex;
    gap: 8px;
    margin-left: 5px;
}

/* work area */
.workspace {
    display: flex;
    flex: 1;
    min-height: 0;
}

.pages {
    display: flex;
    flex-direction: column;
    width: 96px;
    padding-right: 1px;
    border-right: 1px solid #ccc;
}

.pages-tools {
    display: flex;
    align-items: center;
    gap: 11px;
    height: 34px;
    padding-left: 5px;
    border-bottom: 1px solid #ddd;
}

.pages-tools svg {
    width: 12px;
    height: 12px;
}

.big svg {
    width: 14px;
    height: 14px;
}

.pages-list {
    flex: 1;
    margin: 2px 1px;
    padding: 25px 7px 0 8px;
    border: 1px solid #ccc;
}

.thumb {
    display: block;
    color: #444;
    text-align: center;
    text-decoration: none;
}

.thumb svg {
    width: 100%;
    border: 1px solid #555;
}

.viewer {
    position: relative;
    flex: 1;
    min-width: 0;
    padding: 36px 15px 0 14px;
    background-color: #dfdfdf;
}

.flag {
    position: absolute;
    top: 0;
    left: 0;
    width: 24px;
    height: 24px;
}

.sheet {
    width: 100%;
    background-color: #fff;
    box-shadow: 0 0 2px rgba(0, 0, 0, 0.4);
    font-family: "Liberation Sans", sans-serif;
}

.label {
    font-size: 7px;
    fill: #222;
}

.station {
    font-size: 4px;
    fill: #333;
}

.note {
    font-size: 4px;
    fill: #444;
}

.dark {
    font-weight: bold;
}

.axis {
    font-size: 7px;
    text-anchor: middle;
    fill: #222;
}

.project {
    font-size: 6px;
    text-anchor: middle;
    fill: #222;
}

.tiny {
    font-size: 3px;
    fill: #222;
}

.center {
    text-anchor: middle;
}

.markup-text {
    font-family: "Open Sans", sans-serif;
    font-size: 7px;
    fill: #ea3b3b;
}

/* issues panel */
.issues {
    width: 220px;
    background-color: #fff;
}

.issues-head {
    display: flex;
    align-items: center;
    gap: 5px;
    height: 34px;
    padding: 0 7px 0 8px;
    border-bottom: 1px solid #ddd;
}

.issues-flag {
    width: 12px;
    height: 16px;
}

.issues-head h2 {
    flex: 1;
    margin-left: 1px;
    font-size: 13px;
    font-weight: 300;
    line-height: 18px;
    color: #444;
}

.boxed {
    width: 24px;
    height: 19px;
    border: 1px solid #a5afb6;
    border-radius: 1px;
}

.issues-head .big {
    margin-left: 2px;
}

.issue-list {
    list-style: none;
}

.issue {
    display: grid;
    grid-template-columns: 16px 1fr auto;
    column-gap: 5px;
    padding: 7px 14px 8px 4px;
    border-bottom: 1px solid #ddd;
}

.avatar {
    width: 16px;
    height: 16px;
    border-radius: 50%;
    background-color: #2eb83d;
    color: #fff;
    font-size: 7px;
    font-weight: 600;
    line-height: 16px;
    text-align: center;
}

.issue h3 {
    font-size: 7px;
    line-height: 10px;
    color: #3a3f43;
}

.issue time {
    display: block;
    font-size: 6px;
    font-style: italic;
    line-height: 8px;
    color: #a5a5a5;
}

.state {
    align-self: end;
    font-size: 6px;
    line-height: 8px;
}

.comments {
    display: flex;
    grid-column: 1 / -1;
    align-items: center;
    gap: 5px;
    margin-top: 8px;
    padding-left: 8px;
    color: #2563a8;
    text-decoration: none;
}

.comments svg {
    width: 8px;
    height: 8px;
}

.comments.open {
    font-weight: bold;
    color: #3a3f43;
}

.issue.selected {
    padding-right: 4px;
    padding-bottom: 4px;
    border-bottom: none;
    background-color: #def0f8;
}

.selected .state {
    margin-right: 10px;
}

.comment {
    display: flex;
    grid-column: 1 / -1;
    gap: 6px;
    margin: 7px 0 8px 21px;
}

.reply {
    display: flex;
    grid-column: 1 / -1;
}

.reply input {
    flex: 1;
    height: 20px;
    padding: 0 4px;
    border: 1px solid #ccd6db;
}

.reply button {
    width: 22px;
    height: 20px;
    background-color: #bccfd8;
}

.taskbar {
    height: 2px;
    background-color: #31567c;
}

/* issue dialog */
.dialog {
    position: absolute;
    top: 238px;
    left: 17px;
    display: flex;
    width: 407px;
    background-color: #fff;
    box-shadow: 0 0 3px rgba(0, 0, 0, 0.6);
}

.dialog h2 {
    font-size: 13px;
    font-weight: 300;
    line-height: 18px;
    color: #444;
}

.summary {
    width: 135px;
    padding: 7px 10px 24px;
    background-color: #f4f4f4;
}

.category {
    display: flex;
    gap: 20px;
    margin-top: 9px;
}

.category b,
.status label,
.summary dt,
.fields label {
    font-weight: 600;
}

.status {
    display: flex;
    align-items: center;
    justify-content: flex-end;
    gap: 4px;
    margin: 13px 4px 42px 0;
}

.select {
    display: grid;
    align-items: center;
}

.select select,
.select svg {
    grid-area: 1 / 1;
}

.select select {
    appearance: none;
    height: 18px;
    padding: 0 7px;
    border: 1px solid #ccc;
    border-radius: 1px;
    background-color: #fff;
}

.select svg {
    justify-self: end;
    width: 8px;
    height: 8px;
    margin-right: 6px;
    pointer-events: none;
}

.status .select {
    width: 70px;
}

.summary dd {
    margin-bottom: 13px;
}

.summary dd:last-child {
    margin-bottom: 0;
}

.details {
    display: flex;
    flex: 1;
    flex-direction: column;
}

.details-head {
    display: flex;
    justify-content: space-between;
    padding: 7px 15px 9px 9px;
}

.details-head button {
    height: 12px;
}

.fields {
    display: flex;
    flex-direction: column;
    align-items: flex-start;
    padding: 0 63px 0 10px;
}

.fields label {
    margin-bottom: 4px;
}

.fields input,
.fields textarea {
    width: 100%;
    border: 1px solid #ccc;
    border-radius: 1px;
    resize: none;
}

.fields input {
    height: 15px;
    margin-bottom: 7px;
    padding: 0 2px;
}

.fields textarea {
    display: block;
    height: 57px;
    margin-bottom: 6px;
    padding: 1px;
}

.fields .select {
    width: 126px;
    margin-bottom: 6px;
}

.fields .select select {
    height: 15px;
    padding: 0 2px;
    border-color: #999;
}

.due {
    display: flex;
    align-items: center;
    gap: 5px;
}

.due button {
    width: 18px;
    height: 17px;
    border: 1px solid #ddd;
    border-radius: 1px;
}

.due svg {
    width: 8px;
    height: 8px;
}

.actions {
    display: flex;
    justify-content: flex-end;
    gap: 4px;
    margin: auto 4px 0 0;
    padding: 5px 13px 9px;
    border-top: 1px solid #ddd;
}

.actions button {
    height: 19px;
    padding: 0 5px;
    border-radius: 1px;
    background-color: #d0d8dd;
    color: #fff;
}

.actions .cancel {
    border: 1px solid #a5b0b7;
    background-color: #fff;
    color: #444;
}
```
